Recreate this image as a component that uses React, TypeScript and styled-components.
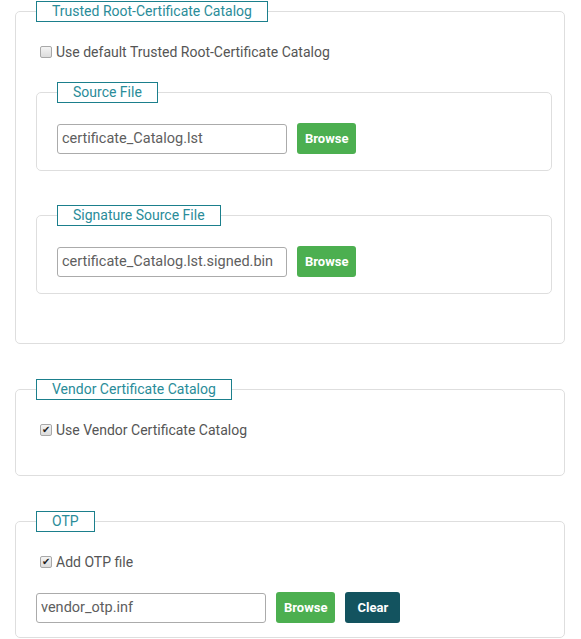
import React from "react";
import styled, { createGlobalStyle } from "styled-components";

const Global = createGlobalStyle`
  html, body { margin: 0; padding: 0; background: #fff; }
  body { font-family: Roboto, "Liberation Sans", sans-serif; color: #555; }
`;

const Page = styled.div`
  padding: 1px 16px 0 15px;
  display: flex;
  flex-direction: column;
`;

const Group = styled.fieldset<{ $pb: number; $pr?: number }>`
  margin: 0 0 35px 0;
  border: 1px solid #dedede;
  border-radius: 5px;
  padding: 0 ${(p) => p.$pr ?? 12}px ${(p) => p.$pb}px 20px;
  min-width: 0;
  &:last-child { margin-bottom: 0; }
`;

const SubGroup = styled(Group)`
  margin: 20px 0 0 0;
  & + & { margin-top: 34px; }
`;

const Legend = styled.legend`
  border: 1px solid #1b7f8c;
  color: #2a8c99;
  font-size: 14px;
  line-height: 19px;
  padding: 0 15px;
  margin-left: 0;
`;

const CheckRow = styled.label`
  display: flex;
  align-items: center;
  height: 20px;
  margin-top: 20px;
  font-size: 14px;
  color: #555;
`;

const Box = styled.span<{ $checked: boolean }>`
  box-sizing: border-box;
  width: 12px;
  height: 12px;
  margin: 0 4px 0 4px;
  border: 1px solid #a8a8a8;
  border-radius: 2px;
  background: linear-gradient(#f4f4f4, #dcdcdc);
  display: inline-flex;
  align-items: center;
  justify-content: center;
  font-size: 10px;
  line-height: 1;
  color: #222;
  &::after { content: "${(p) => (p.$checked ? "✔" : "")}"; }
`;

const FileRow = styled.div`
  display: flex;
  align-items: center;
  margin-top: 20px;
  gap: 10px;
`;

const TextInput = styled.input`
  box-sizing: border-box;
  width: 230px;
  height: 30px;
  border: 1px solid #ababab;
  border-radius: 3px;
  padding: 0 4px;
  font-family: Roboto, "Liberation Sans", sans-serif;
  font-size: 14.5px;
  color: #5e5e5e;
  outline: none;
`;

const Button = styled.button<{ $tone: "green" | "dark" }>`
  box-sizing: border-box;
  height: 31px;
  padding: 0 8px;
  border: none;
  border-radius: 3px;
  background: ${(p) => (p.$tone === "green" ? "#4caf50" : "#13535f")};
  color: #fff;
  font-family: Roboto, "Liberation Sans", sans-serif;
  font-weight: bold;
  font-size: 13px;
  min-width: ${(p) => (p.$tone === "green" ? 59 : 55)}px;
`;

const Check = ({ checked, label }: { checked: boolean; label: string }) => (
  <CheckRow>
    <Box $checked={checked} />
    {label}
  </CheckRow>
);

const FileField = ({ value, clear }: { value: string; clear?: boolean }) => (
  <FileRow>
    <TextInput defaultValue={value} readOnly />
    <Button $tone="green">Browse</Button>
    {clear && <Button $tone="dark">Clear</Button>}
  </FileRow>
);

export default function App() {
  return (
    <>
      <Global />
      <Page>
        <Group $pb={49}>
          <Legend>Trusted Root-Certificate Catalog</Legend>
          <Check checked={false} label="Use default Trusted Root-Certificate Catalog" />
          <SubGroup $pb={16}>
            <Legend>Source File</Legend>
            <FileField value="certificate_Catalog.lst" />
          </SubGroup>
          <SubGroup $pb={16}>
            <Legend>Signature Source File</Legend>
            <FileField value="certificate_Catalog.lst.signed.bin" />
          </SubGroup>
        </Group>
        <Group $pb={35}>
          <Legend>Vendor Certificate Catalog</Legend>
          <Check checked label="Use Vendor Certificate Catalog" />
        </Group>
        <Group $pb={14}>
          <Legend>OTP</Legend>
          <Check checked label="Add OTP file" />
          <FileField value="vendor_otp.inf" clear />
        </Group>
      </Page>
    </>
  );
}
